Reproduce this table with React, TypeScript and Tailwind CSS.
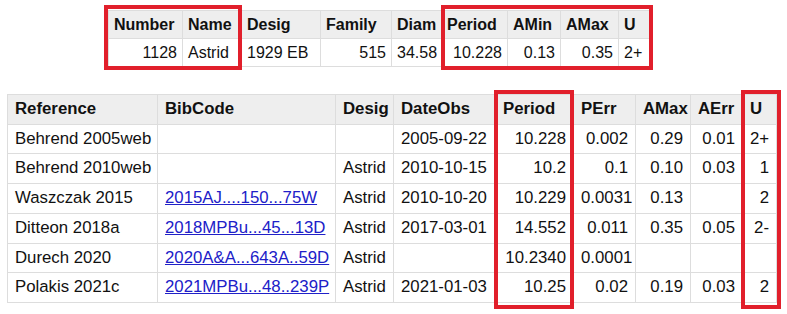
const font = { fontFamily: '"Liberation Sans", Arial, sans-serif' };

type Col = { label: string; w: number; right?: boolean };

const topCols: Col[] = [
  { label: "Number", w: 74, right: true },
  { label: "Name", w: 59 },
  { label: "Desig", w: 79 },
  { label: "Family", w: 71, right: true },
  { label: "Diam", w: 50, right: true },
  { label: "Period", w: 66, right: true },
  { label: "AMin", w: 53, right: true },
  { label: "AMax", w: 58, right: true },
  { label: "U", w: 32 },
];

const topRow = ["1128", "Astrid", "1929 EB", "515", "34.58", "10.228", "0.13", "0.35", "2+"];

const refCols: Col[] = [
  { label: "Reference", w: 150 },
  { label: "BibCode", w: 178 },
  { label: "Desig", w: 58 },
  { label: "DateObs", w: 102 },
  { label: "Period", w: 78, right: true },
  { label: "PErr", w: 62, right: true },
  { label: "AMax", w: 55, right: true },
  { label: "AErr", w: 52, right: true },
  { label: "U", w: 34, right: true },
];

const refRows: string[][] = [
  ["Behrend 2005web", "", "", "2005-09-22", "10.228", "0.002", "0.29", "0.01", "2+"],
  ["Behrend 2010web", "", "Astrid", "2010-10-15", "10.2", "0.1", "0.10", "0.03", "1"],
  ["Waszczak 2015", "2015AJ....150...75W", "Astrid", "2010-10-20", "10.229", "0.0031", "0.13", "", "2"],
  ["Ditteon 2018a", "2018MPBu...45...13D", "Astrid", "2017-03-01", "14.552", "0.011", "0.35", "0.05", "2-"],
  ["Durech 2020", "2020A&A...643A..59D", "Astrid", "", "10.2340", "0.0001", "", "", ""],
  ["Polakis 2021c", "2021MPBu...48..239P", "Astrid", "2021-01-03", "10.25", "0.02", "0.19", "0.03", "2"],
];

export default function App() {
  return (
    <div className="w-[787px] h-[314px] bg-white text-[#111] overflow-hidden" style={font}>
      {/* Object summary */}
      <div className="relative pt-[10px] pl-[108px]">
        <table className="border-collapse table-fixed w-[542px] text-[16px]">
          <colgroup>
            {topCols.map((c) => (
              <col key={c.label} style={{ width: c.w }} />
            ))}
          </colgroup>
          <thead>
            <tr className="bg-[#eeeeee]">
              {topCols.map((c) => (
                <th
                  key={c.label}
                  className="border border-[#dddddd] px-[5px] py-[5px] leading-[17px] font-bold text-left whitespace-nowrap"
                >
                  {c.label}
                </th>
              ))}
            </tr>
          </thead>
          <tbody>
            <tr>
              {topRow.map((v, i) => (
                <td
                  key={i}
                  className={`border border-[#dddddd] px-[5px] py-[5px] leading-[17px] whitespace-nowrap ${topCols[i].right ? "text-right" : "text-left"}`}
                >
                  {v}
                </td>
              ))}
            </tr>
          </tbody>
        </table>
        <div className="absolute left-[104px] top-[5px] w-[138px] h-[65px] border-4 border-[#e11f2b]" />
        <div className="absolute left-[441px] top-[5px] w-[212px] h-[65px] border-4 border-[#e11f2b]" />
      </div>

      {/* Lightcurve references */}
      <div className="relative mt-[27px] pl-[7px]">
        <table className="border-collapse table-fixed w-[769px] text-[16.8px]">
          <colgroup>
            {refCols.map((c) => (
              <col key={c.label} style={{ width: c.w }} />
            ))}
          </colgroup>
          <thead>
            <tr className="bg-[#eeeeee]">
              {refCols.map((c) => (
                <th
                  key={c.label}
                  className="border border-[#dddddd] px-[7px] py-[5px] leading-[18.7px] font-bold text-left whitespace-nowrap"
                >
                  {c.label}
                </th>
              ))}
            </tr>
          </thead>
          <tbody>
            {refRows.map((row, r) => (
              <tr key={r}>
                {row.map((v, i) => (
                  <td
                    key={i}
                    className={`border border-[#dddddd] px-[7px] py-[5px] leading-[18.7px] whitespace-nowrap ${refCols[i].right ? "text-right" : "text-left"}`}
                  >
                    {i === 1 && v ? (
                      <a href="#" className="text-[#2020c8] underline">
                        {v}
                      </a>
                    ) : (
                      v
                    )}
                  </td>
                ))}
              </tr>
            ))}
          </tbody>
        </table>
        <div className="absolute left-[494px] top-[-4px] w-[80px] h-[219px] border-4 border-[#e11f2b]" />
        <div className="absolute left-[741px] top-[-4px] w-[40px] h-[219px] border-4 border-[#e11f2b]" />
      </div>
    </div>
  );
}
